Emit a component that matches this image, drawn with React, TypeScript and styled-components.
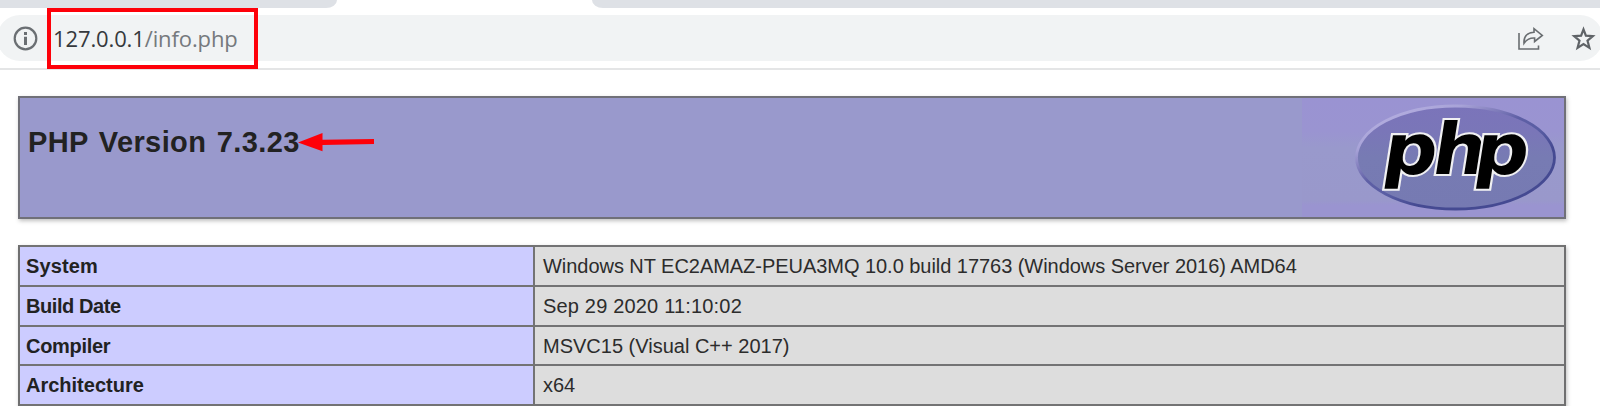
import React from 'react';
import styled, { createGlobalStyle } from 'styled-components';

const GlobalStyle = createGlobalStyle`
  * { box-sizing: border-box; }
  body { margin: 0; background: #fff; overflow: hidden; }
`;

const Page = styled.div`
  position: relative;
  width: 1600px;
  height: 406px;
  overflow: hidden;
  background: #fff;
  font-family: 'Liberation Sans', Arial, sans-serif;
  color: #222;
`;

const TabStrip = styled.div`
  display: flex;
  justify-content: space-between;
  height: 8px;
`;

const Tab = styled.div<{ $side: 'left' | 'right' }>`
  width: ${(p) => (p.$side === 'left' ? '337px' : '1008px')};
  background: #dee1e6;
  border-radius: ${(p) => (p.$side === 'left' ? '0 0 11px 0 / 0 0 8px 0' : '0 0 0 11px / 0 0 0 8px')};
`;

const Toolbar = styled.div`
  height: 62px;
  padding-top: 7px;
  border-bottom: 2px solid #e4e5e6;
`;

const AddressBar = styled.div`
  display: flex;
  align-items: center;
  width: 1606px;
  height: 46px;
  margin-left: -3px;
  padding: 0 7px 0 16px;
  border-radius: 23px;
  background: #f1f3f4;
`;

const Url = styled.div`
  margin: 0 auto 0 15px;
  font: 22px/30px 'Open Sans', 'Noto Sans', sans-serif;
  letter-spacing: -0.12px;
  color: #75797d;
  white-space: nowrap;
`;

const Host = styled.span`
  color: #36393d;
`;

const BarIcon = styled.svg<{ $gap?: number }>`
  flex: none;
  display: block;
  margin-right: ${(p) => p.$gap ?? 0}px;
`;

const Content = styled.main`
  width: 1548px;
  margin: 26px 0 0 18px;
`;

const Banner = styled.header`
  display: flex;
  justify-content: space-between;
  height: 123px;
  border: 2px solid #707078;
  background: #9999cc;
  box-shadow: 1px 2px 4px rgba(0, 0, 0, 0.25);
`;

const Title = styled.h1`
  margin: 27px 0 0 8px;
  font-size: 29px;
  line-height: 34px;
  letter-spacing: 0.4px;
  word-spacing: 2px;
  white-space: nowrap;
`;

const Logo = styled.svg`
  display: block;
  flex: none;
`;

const InfoTable = styled.section`
  display: grid;
  grid-template-columns: 513px 1fr;
  grid-template-rows: 40px 40px 39px 40px 40px;
  margin-top: 26px;
  border: solid #6f6f70;
  border-width: 0 2px;
  box-shadow: 1px 2px 4px rgba(0, 0, 0, 0.25);
`;

const Cell = styled.div<{ $spacing?: number }>`
  padding-top: 8px;
  border-top: 2px solid #737374;
  font-size: 20px;
  line-height: 23px;
  letter-spacing: ${(p) => p.$spacing ?? 0}px;
  white-space: nowrap;
`;

const Label = styled(Cell)`
  padding-left: 6px;
  background: #ccccff;
  font-weight: 700;
`;

const Value = styled(Cell)`
  padding-left: 8px;
  border-left: 2px solid #737374;
  background: #dddddd;
  color: #2c2c2c;
`;

const Highlight = styled.div`
  position: absolute;
  left: 47px;
  top: 8px;
  width: 211px;
  height: 61px;
  border: 4px solid #fe0009;
`;

const Pointer = styled.svg`
  position: absolute;
  left: 296px;
  top: 130px;
`;

const rows = [
  {
    label: 'System',
    value: 'Windows NT EC2AMAZ-PEUA3MQ 10.0 build 17763 (Windows Server 2016) AMD64',
    labelSpacing: 0.15,
    valueSpacing: -0.04,
  },
  { label: 'Build Date', value: 'Sep 29 2020 11:10:02', labelSpacing: -0.42, valueSpacing: 0.18 },
  { label: 'Compiler', value: 'MSVC15 (Visual C++ 2017)', labelSpacing: -0.3, valueSpacing: 0 },
  { label: 'Architecture', value: 'x64', labelSpacing: 0, valueSpacing: 0 },
  { label: '', value: '', labelSpacing: 0, valueSpacing: 0 },
];

function PhpLogo() {
  return (
    <Logo width="262" height="119" viewBox="0 0 262 119">
      <defs>
        <linearGradient id="backdrop" x1="0" y1="0" x2="0" y2="1">
          <stop offset="0" stopColor="#9a93d2" />
          <stop offset="0.28" stopColor="#9a94d1" />
          <stop offset="0.42" stopColor="#9999cc" />
          <stop offset="0.86" stopColor="#9998cb" />
          <stop offset="0.9" stopColor="#9a94d0" />
          <stop offset="1" stopColor="#9a94d0" />
        </linearGradient>
        <linearGradient id="face" x1="0" y1="0" x2="0" y2="1">
          <stop offset="0" stopColor="#7b74ba" />
          <stop offset="0.25" stopColor="#7a76b8" />
          <stop offset="0.5" stopColor="#777bb3" />
          <stop offset="1" stopColor="#767ab2" />
        </linearGradient>
        <linearGradient id="rim" x1="0" y1="0" x2="0.79" y2="0.98">
          <stop offset="0.1" stopColor="#b5afe0" />
          <stop offset="0.26" stopColor="#a8a3d8" />
          <stop offset="0.36" stopColor="#8783c0" />
          <stop offset="0.48" stopColor="#5e5fa5" />
          <stop offset="0.6" stopColor="#5a5ea4" />
          <stop offset="0.75" stopColor="#454a92" />
          <stop offset="1" stopColor="#454a92" />
        </linearGradient>
      </defs>
      <rect width="262" height="119" fill="url(#backdrop)" />
      <ellipse cx="153.5" cy="59.5" rx="99" ry="51.5" fill="url(#face)" stroke="url(#rim)" strokeWidth="2.8" />
      <g
        transform="translate(0 75.5) skewX(-9) scale(1.06 1)"
        fontFamily="'DejaVu Sans', sans-serif"
        fontWeight="700"
        fontSize="71"
        stroke="#f0f0f2"
        strokeWidth="4.2"
        paintOrder="stroke"
        fill="#000"
      >
        <text x="74">p</text>
        <text x="120.5">h</text>
        <text x="160.5">p</text>
      </g>
    </Logo>
  );
}

export default function App() {
  return (
    <>
      <GlobalStyle />
      <Page>
        <TabStrip>
          <Tab $side="left" />
          <Tab $side="right" />
        </TabStrip>
        <Toolbar>
          <AddressBar>
            <BarIcon width="25" height="25" viewBox="0 0 25 25">
              <circle cx="12.5" cy="12.5" r="10.8" fill="none" stroke="#6b6f73" strokeWidth="2.2" />
              <path d="M12.5 10.8V19M12.5 6v3" stroke="#6b6f73" strokeWidth="3" />
            </BarIcon>
            <Url>
              <Host>127.0.0.1</Host>/info.php
            </Url>
            <BarIcon $gap={27} width="27" height="25" viewBox="0 0 27 25" fill="none" stroke="#696d70" strokeWidth="1.6">
              <path d="M2 7V23H21.5V19.5" />
              <path d="M7 17.3C6.5 9.8 10.4 6.8 17 6.3V2.6L25.3 9.5L17.6 15.5V12C12.8 11.7 9.7 13.2 7 17.3Z" />
            </BarIcon>
            <BarIcon width="25" height="25" viewBox="0 0 25 25" fill="none" stroke="#5f6367" strokeWidth="2.2">
              <path d="M12.5 3.4L14.9 9.7L21.8 10.2L16.5 14.6L18.4 21.8L12.5 18L6.6 21.8L8.5 14.6L3.2 10.2L10.1 9.7Z" />
            </BarIcon>
          </AddressBar>
        </Toolbar>
        <Content>
          <Banner>
            <Title>PHP Version 7.3.23</Title>
            <PhpLogo />
          </Banner>
          <InfoTable>
            {rows.map((row, i) => (
              <React.Fragment key={i}>
                <Label $spacing={row.labelSpacing}>{row.label}</Label>
                <Value $spacing={row.valueSpacing}>{row.value}</Value>
              </React.Fragment>
            ))}
          </InfoTable>
        </Content>
        <Highlight />
        <Pointer width="80" height="24" viewBox="0 0 80 24">
          <path d="M2 12.5L26.5 3V9.8L78 9V14L26.5 15V21.2Z" fill="#fe0009" />
        </Pointer>
      </Page>
    </>
  );
}
